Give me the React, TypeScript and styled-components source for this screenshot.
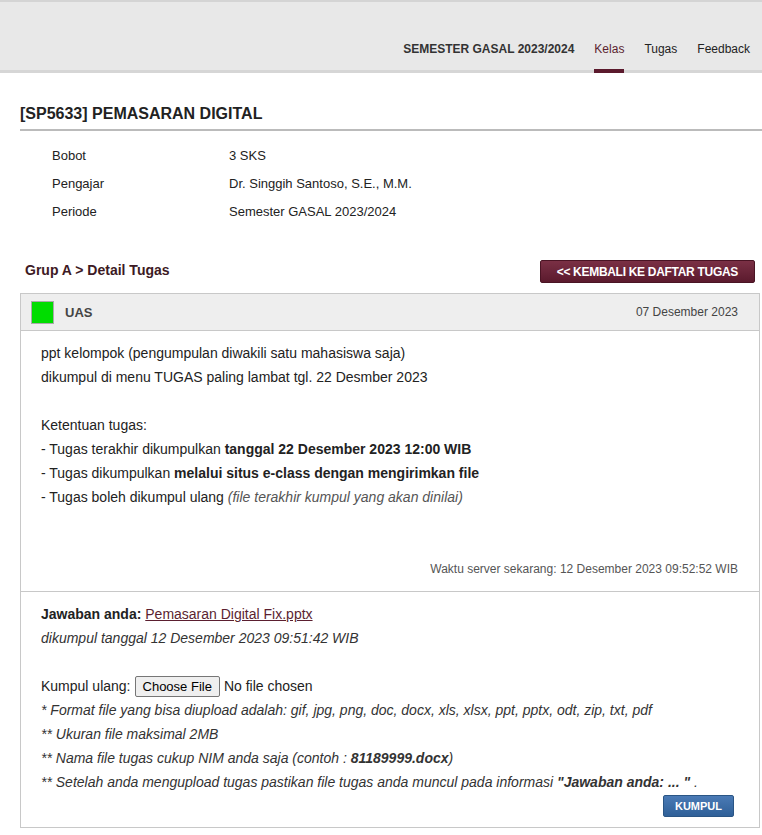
import styled, { createGlobalStyle } from 'styled-components';

const GlobalStyle = createGlobalStyle`
  body {
    margin: 0;
    background: #fff;
    font-family: "Liberation Sans", Arial, sans-serif;
    color: #222;
  }
`;

const narrow = `"Liberation Sans Narrow", "Arial Narrow", "Liberation Sans", sans-serif`;

const Header = styled.header`
  height: 73px;
  background: #e8e8e8;
  border-top: 2px solid #d4d4d4;
  border-bottom: 3px solid #d6d6d6;
  box-sizing: border-box;
  display: flex;
  justify-content: flex-end;
  align-items: flex-end;
  gap: 20px;
  padding-right: 12px;
`;

const NavItem = styled.a<{ $active?: boolean; $bold?: boolean }>`
  font-size: 12px;
  font-weight: ${(p) => (p.$bold ? 'bold' : 'normal')};
  color: ${(p) => (p.$active ? '#5b1f30' : p.$bold ? '#333' : '#222')};
  text-decoration: none;
  padding-bottom: 13px;
  margin-bottom: -3px;
  border-bottom: 4px solid ${(p) => (p.$active ? '#5b1a2d' : 'transparent')};
`;

const Main = styled.main`
  padding: 0 0 0 20px;
`;

const Title = styled.h1`
  margin: 32px 0 0;
  font-size: 16px;
  font-weight: bold;
  color: #222;
  padding-bottom: 6px;
  border-bottom: 2px solid #bbb;
`;

const InfoTable = styled.div`
  display: grid;
  grid-template-columns: 177px auto;
  padding: 11px 0 0 32px;
  font-size: 13px;
  color: #222;
`;

const InfoCell = styled.div`
  line-height: 28px;
`;

const Toolbar = styled.div`
  display: flex;
  justify-content: space-between;
  align-items: center;
  margin-top: 34px;
  padding: 0 7px 0 5px;
`;

const Crumb = styled.div`
  font-family: ${narrow};
  font-weight: bold;
  font-size: 14px;
  color: #3d1a24;
  margin-bottom: 3px;
`;

const BackButton = styled.button`
  font-family: ${narrow};
  font-weight: bold;
  font-size: 12px;
  letter-spacing: -0.3px;
  color: #fff;
  background: linear-gradient(#7a3045, #5b1a2d);
  border: 1px solid #4a1424;
  border-radius: 2px;
  height: 23px;
  padding: 0 16px 0 16px;
`;

const Panel = styled.section`
  margin: 10px 2px 0 0;
  border: 1px solid #c8c8c8;
`;

const PanelHead = styled.div`
  display: flex;
  align-items: center;
  height: 36px;
  background: #eee;
  border-bottom: 1px solid #c8c8c8;
  padding: 0 21px 0 10px;
`;

const Badge = styled.span`
  width: 21px;
  height: 21px;
  background: #00dd00;
  border: 1px solid #aaa;
`;

const HeadTitle = styled.span`
  font-family: ${narrow};
  font-weight: bold;
  font-size: 13px;
  color: #444;
  margin-left: 11px;
  flex: 1;
`;

const HeadDate = styled.span`
  font-family: ${narrow};
  font-size: 12px;
  color: #444;
`;

const Body = styled.div<{ $last?: boolean }>`
  padding: 10px 21px 10px 20px;
  font-size: 14px;
  line-height: 24px;
  border-bottom: ${(p) => (p.$last ? 'none' : '1px solid #c8c8c8')};
`;

const Line = styled.div`
  min-height: 24px;
`;

const Muted = styled.i`
  color: #555;
`;

const ServerTime = styled.div`
  margin-top: 48px;
  text-align: right;
  font-size: 12px;
  color: #555;
`;

const FileLink = styled.a`
  color: #5b1f30;
  text-decoration: underline;
`;

const Em = styled.div`
  font-style: italic;
  color: #333;
`;

const FileRow = styled.div`
  display: flex;
  align-items: center;
  gap: 4px;
  height: 24px;
`;

const ChooseFile = styled.button`
  font-family: "Liberation Sans", Arial, sans-serif;
  font-size: 13px;
  background: #efefef;
  border: 1px solid #767676;
  border-radius: 2px;
  height: 21px;
  padding: 0 7px;
  color: #000;
`;

const NoteList = styled.div`
  font-family: ${narrow};
  font-style: italic;
  font-size: 14px;
  color: #333;
`;

const Actions = styled.div`
  display: flex;
  justify-content: flex-end;
  margin-top: 1px;
  padding-right: 4px;
`;

const SubmitButton = styled.button`
  font-family: ${narrow};
  font-weight: bold;
  font-size: 11px;
  color: #fff;
  background: linear-gradient(#4a7ab5, #2f6098);
  border: 1px solid #2a5585;
  border-radius: 2px;
  height: 22px;
  padding: 0 11px;
`;

export default function App() {
  return (
    <>
      <GlobalStyle />
      <Header>
        <NavItem $bold>SEMESTER GASAL 2023/2024</NavItem>
        <NavItem $active>Kelas</NavItem>
        <NavItem>Tugas</NavItem>
        <NavItem>Feedback</NavItem>
      </Header>
      <Main>
        <Title>[SP5633] PEMASARAN DIGITAL</Title>
        <InfoTable>
          <InfoCell>Bobot</InfoCell>
          <InfoCell>3 SKS</InfoCell>
          <InfoCell>Pengajar</InfoCell>
          <InfoCell>Dr. Singgih Santoso, S.E., M.M.</InfoCell>
          <InfoCell>Periode</InfoCell>
          <InfoCell>Semester GASAL 2023/2024</InfoCell>
        </InfoTable>
        <Toolbar>
          <Crumb>Grup A &gt; Detail Tugas</Crumb>
          <BackButton>&lt;&lt; KEMBALI KE DAFTAR TUGAS</BackButton>
        </Toolbar>
        <Panel>
          <PanelHead>
            <Badge />
            <HeadTitle>UAS</HeadTitle>
            <HeadDate>07 Desember 2023</HeadDate>
          </PanelHead>
          <Body>
            <Line>ppt kelompok (pengumpulan diwakili satu mahasiswa saja)</Line>
            <Line>dikumpul di menu TUGAS paling lambat tgl. 22 Desmber 2023</Line>
            <Line />
            <Line>Ketentuan tugas:</Line>
            <Line>
              - Tugas terakhir dikumpulkan <b>tanggal 22 Desember 2023 12:00 WIB</b>
            </Line>
            <Line>
              - Tugas dikumpulkan <b>melalui situs e-class dengan mengirimkan file</b>
            </Line>
            <Line>
              - Tugas boleh dikumpul ulang <Muted>(file terakhir kumpul yang akan dinilai)</Muted>
            </Line>
            <ServerTime>Waktu server sekarang: 12 Desember 2023 09:52:52 WIB</ServerTime>
          </Body>
          <Body $last>
            <Line>
              <b>Jawaban anda:</b> <FileLink href="#">Pemasaran Digital Fix.pptx</FileLink>
            </Line>
            <Em>dikumpul tanggal 12 Desember 2023 09:51:42 WIB</Em>
            <Line />
            <FileRow>
              Kumpul ulang: <ChooseFile>Choose File</ChooseFile> No file chosen
            </FileRow>
            <NoteList>
              <Line>* Format file yang bisa diupload adalah: gif, jpg, png, doc, docx, xls, xlsx, ppt, pptx, odt, zip, txt, pdf</Line>
              <Line>** Ukuran file maksimal 2MB</Line>
              <Line>
                ** Nama file tugas cukup NIM anda saja (contoh : <b>81189999.docx</b>)
              </Line>
              <Line>
                ** Setelah anda mengupload tugas pastikan file tugas anda muncul pada informasi <b>"Jawaban anda: ... "</b> .
              </Line>
            </NoteList>
            <Actions>
              <SubmitButton>KUMPUL</SubmitButton>
            </Actions>
          </Body>
        </Panel>
      </Main>
    </>
  );
}
